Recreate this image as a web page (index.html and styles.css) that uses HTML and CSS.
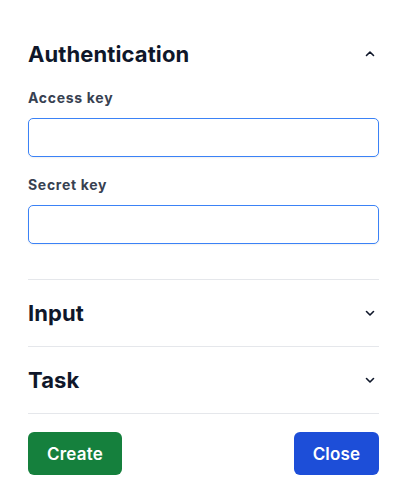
FILE: index.html
```html
<!DOCTYPE html>
<html>
<head>
<meta charset="utf-8">
<link rel="stylesheet" href="styles.css">
</head>
<body>
<div class="panel">
  <section class="section open">
    <div class="section-head">
      <h2 class="section-title">Authentication</h2>
      <svg class="chev" width="12" height="12" viewBox="0 0 12 12"><path d="M2.5 7.5 L6 4 L9.5 7.5" fill="none" stroke="#0f172a" stroke-width="1.6" stroke-linecap="round" stroke-linejoin="round"/></svg>
    </div>
    <div class="section-body">
      <div class="field">
        <label class="label">Access key</label>
        <input class="input" type="text">
      </div>
      <div class="field">
        <label class="label">Secret key</label>
        <input class="input" type="text">
      </div>
    </div>
  </section>
  <section class="section">
    <div class="section-head">
      <h2 class="section-title">Input</h2>
      <svg class="chev" width="12" height="12" viewBox="0 0 12 12"><path d="M2.5 4.5 L6 8 L9.5 4.5" fill="none" stroke="#0f172a" stroke-width="1.6" stroke-linecap="round" stroke-linejoin="round"/></svg>
    </div>
  </section>
  <section class="section">
    <div class="section-head">
      <h2 class="section-title">Task</h2>
      <svg class="chev" width="12" height="12" viewBox="0 0 12 12"><path d="M2.5 4.5 L6 8 L9.5 4.5" fill="none" stroke="#0f172a" stroke-width="1.6" stroke-linecap="round" stroke-linejoin="round"/></svg>
    </div>
  </section>
  <div class="actions">
    <button class="btn btn-create">Create</button>
    <button class="btn btn-close">Close</button>
  </div>
</div>
</body>
</html>
```
FILE: styles.css
```css
* { box-sizing: border-box; }
html, body { margin: 0; padding: 0; background: #ffffff; }
body { font-family: Inter, "Noto Sans", sans-serif; }
.panel {
  width: 351px;
  margin-left: 28px;
  padding-top: 21px;
}
.section { border-bottom: 1px solid #e5e7eb; }
.section-head {
  height: 66px;
  display: flex;
  align-items: center;
  justify-content: space-between;
}
.section-title {
  margin: 0;
  font-size: 22px;
  font-weight: 700;
  color: #0f172a;
  letter-spacing: 0.1px;
}
.chev { margin-right: 3px; }
.section-body { padding-top: 1px; padding-bottom: 35px; }
.field + .field { margin-top: 18px; }
.label {
  display: block;
  font-size: 14px;
  line-height: 20px;
  font-weight: 700;
  color: #374151;
  letter-spacing: 0.7px;
  margin-bottom: 10px;
}
.input {
  display: block;
  width: 100%;
  height: 39px;
  border: 1px solid #3b82f6;
  border-radius: 5px;
  box-shadow: 0 1px 2px rgba(0,0,0,0.06);
  outline: none;
  font-family: inherit;
  font-size: 14px;
  padding: 0 10px;
}
.actions {
  display: flex;
  justify-content: space-between;
  padding-top: 18px;
}
.btn {
  height: 43px;
  padding: 0;
  border: none;
  border-radius: 6px;
  font-family: inherit;
  font-size: 17px;
  font-weight: 600;
  letter-spacing: 0.2px;
  color: #ffffff;
}
.btn-create { background: #15803d; width: 94px; }
.btn-close { background: #1d4ed8; width: 85px; }
```
